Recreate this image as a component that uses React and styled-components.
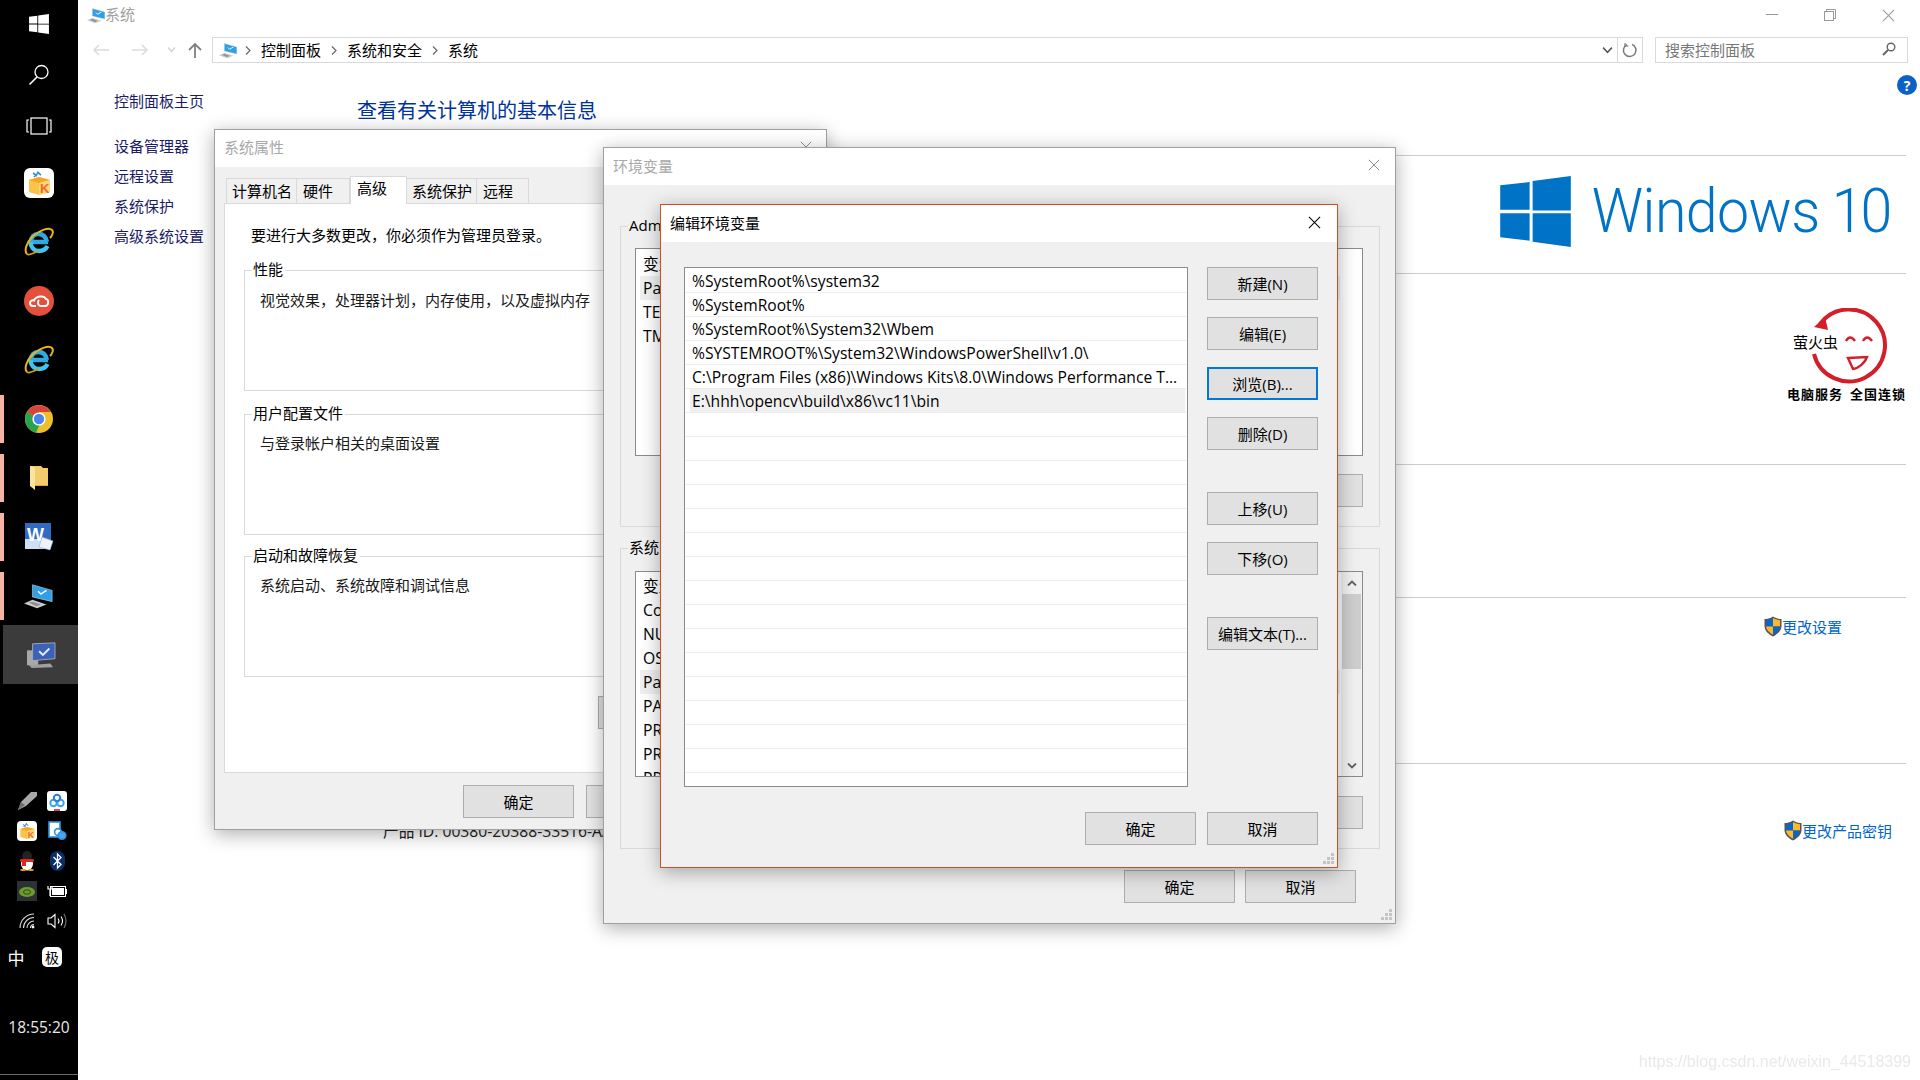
import React from 'react'
import styled, { createGlobalStyle } from 'styled-components'

const GlobalStyle = createGlobalStyle`
  html, body { margin: 0; padding: 0; background: #fff; }
  * { box-sizing: border-box; }
  body {
    font-family: "Open Sans", "Noto Sans CJK SC", sans-serif;
    font-size: 15px;
    color: #000;
  }
`

const Desktop = styled.div`
  position: relative;
  display: flex;
  width: 1920px;
  height: 1080px;
  overflow: hidden;
  background: #fff;
`

/* taskbar */
const Taskbar = styled.aside`
  display: flex;
  flex-direction: column;
  flex: none;
  width: 78px;
  height: 1080px;
  background: #000;
`
const SysButton = styled.div`
  display: flex;
  align-items: center;
  justify-content: center;
  height: ${p => p.$h}px;
`
const AppButton = styled.div`
  position: relative;
  display: flex;
  align-items: center;
  justify-content: center;
  height: 59px;
  background: ${p => (p.$active ? '#3b3b3b' : 'transparent')};
  margin-left: ${p => (p.$active ? 3 : 0)}px;
  ${p =>
    p.$open &&
    `&::before {
      content: '';
      position: absolute;
      left: 0;
      top: 6px;
      width: 4px;
      height: 48px;
      background: #f7b3a3;
    }`}
`
const AppGap = styled.div`
  height: 3px;
`
const Tray = styled.div`
  display: grid;
  grid-template-columns: 30px 30px;
  grid-auto-rows: 30px;
  margin-top: 102px;
  padding-left: 12px;
  > div {
    display: flex;
    align-items: center;
    justify-content: center;
  }
`
const LangRow = styled.div`
  display: flex;
  align-items: center;
  height: 30px;
  margin-top: 6px;
  padding-left: 6px;
  gap: 16px;
  color: #fff;
`
const LangGlyph = styled.span`
  width: 20px;
  text-align: center;
  font-size: 17px;
  font-weight: 400;
`
const ImeBadge = styled.span`
  display: flex;
  align-items: center;
  justify-content: center;
  width: 20px;
  height: 20px;
  border-radius: 5px;
  background: #fff;
  color: #000;
  font-size: 14px;
`
const Clock = styled.div`
  margin-top: 40px;
  height: 30px;
  line-height: 30px;
  text-align: center;
  color: #e8e8e8;
  font-size: 15.5px;
`
const TaskbarEnd = styled.div`
  margin-top: auto;
  height: 6px;
  border-top: 1px solid #6a6a6a;
`

/* explorer window behind the dialogs */
const Explorer = styled.main`
  display: flex;
  flex-direction: column;
  flex: 1;
  min-width: 0;
`
const TitleBar = styled.header`
  display: flex;
  align-items: center;
  height: 30px;
  padding: 0 3px 0 9px;
  color: #a0a0a0;
`
const TitleText = styled.span`
  margin: 0 0 3px -1px;
`
const Controls = styled.div`
  display: flex;
  margin-left: auto;
`
const Control = styled.div`
  display: flex;
  align-items: center;
  justify-content: center;
  width: 58px;
  height: 28px;
`
const NavBar = styled.nav`
  display: flex;
  align-items: flex-start;
  height: 38px;
  padding-top: 7px;
`
const NavButton = styled.div`
  display: flex;
  align-items: center;
  justify-content: center;
  flex: none;
  width: ${p => p.$w}px;
  height: 25px;
  margin-left: ${p => p.$ml || 0}px;
`
const AddressBox = styled.div`
  display: flex;
  align-items: center;
  flex: none;
  width: 1431px;
  height: 26px;
  padding-left: 6px;
  border: 1px solid #d9d9d9;
`
const AddressIcon = styled.span`
  display: flex;
  margin-right: 7px;
`
const Crumb = styled.span`
  margin: 0 10px 2px;
  white-space: nowrap;
`
const AddressEnd = styled.div`
  display: flex;
  align-items: center;
  margin-left: auto;
  height: 100%;
`
const RefreshCell = styled.div`
  display: flex;
  align-items: center;
  justify-content: center;
  width: 25px;
  height: 100%;
  margin-left: 4px;
  border-left: 1px solid #d9d9d9;
`
const SearchBox = styled.div`
  display: flex;
  align-items: center;
  justify-content: space-between;
  flex: none;
  width: 253px;
  height: 26px;
  margin-left: 12px;
  padding: 0 11px 2px 9px;
  border: 1px solid #d9d9d9;
  color: #777;
`
const Content = styled.div`
  position: relative;
  display: flex;
  flex: 1;
`
const SideNav = styled.div`
  flex: none;
  width: 279px;
  padding: 23px 0 0 36px;
`
const SideLink = styled.div`
  line-height: 20px;
  margin-top: ${p => p.$mt}px;
  color: #1b1b66;
`
const Body = styled.div`
  flex: 1;
  padding-right: 14px;
`
const Heading = styled.h1`
  margin: 0;
  height: 87px;
  padding-top: 28px;
  font-size: 20px;
  font-weight: 400;
  line-height: 30px;
  color: #003399;
`
const Section = styled.section`
  display: flex;
  height: ${p => p.$h}px;
  padding: ${p => p.$pt}px ${p => p.$pr}px 0 ${p => p.$pl || 0}px;
  border-top: 1px solid #cccccc;
  justify-content: ${p => p.$justify || 'flex-end'};
  align-items: flex-start;
`
const WindowsWord = styled.div`
  margin-left: -4px;
  font-family: Roboto, sans-serif;
  font-weight: 300;
  font-size: 62px;
  line-height: 70px;
  letter-spacing: -0.6px;
  color: #0173c7;
  white-space: nowrap;
  transform: scaleX(0.923);
  transform-origin: right center;
`
const TenSpace = styled.span`
  margin-left: 13px;
  letter-spacing: -3px;
`
const FireflyBlock = styled.div`
  display: flex;
  flex-direction: column;
  width: 119px;
`
const FireflyCaption = styled.div`
  display: flex;
  justify-content: space-between;
  line-height: 20px;
  font-size: 13px;
  font-weight: 700;
  letter-spacing: 1px;
  white-space: nowrap;
`
const ShieldLink = styled.a`
  display: flex;
  align-items: center;
  line-height: 20px;
  color: #0066cc;
`
const ProductId = styled.span`
  margin-top: 1px;
  line-height: 20px;
  font-size: 15.7px;
  white-space: nowrap;
  color: #222;
`
const HelpBadge = styled.div`
  position: absolute;
  top: 7px;
  right: 3px;
  display: flex;
  align-items: center;
  justify-content: center;
  width: 20px;
  height: 20px;
  border-radius: 50%;
  background: #0b62c4;
  color: #fff;
  font-weight: 700;
  font-size: 14px;
`

/* dialogs sit on the desktop */
const Dialog = styled.section`
  position: absolute;
  left: ${p => p.$left}px;
  top: ${p => p.$top}px;
  width: ${p => p.$w}px;
  height: ${p => p.$h}px;
  display: flex;
  flex-direction: column;
  background: #f0f0f0;
  border: 1px solid ${p => p.$border || '#a0a0a0'};
  box-shadow: 0 4px 18px rgba(0, 0, 0, 0.32);
`
const DialogTitle = styled.header`
  display: flex;
  align-items: center;
  justify-content: space-between;
  flex: none;
  height: ${p => p.$h}px;
  padding: 0 ${p => p.$pr}px ${p => p.$pb || 3}px 9px;
  background: #fff;
  color: ${p => p.$color};
`
const TabStrip = styled.div`
  display: flex;
  align-items: flex-end;
  height: 27px;
  margin: 10px 0 -1px 11px;
  position: relative;
  z-index: 1;
`
const Tab = styled.div`
  width: ${p => p.$w}px;
  height: ${p => (p.$active ? 28 : 26)}px;
  padding: ${p => (p.$active ? 1 : 2)}px 0 0 ${p => p.$pl}px;
  line-height: 20px;
  background: ${p => (p.$active ? '#fff' : '#f0f0f0')};
  border: 1px solid #d9d9d9;
  border-left-width: ${p => (p.$first || p.$active ? 1 : 0)}px;
  border-bottom: ${p => (p.$active ? '0' : '1px solid #d9d9d9')};
`
const TabPanel = styled.div`
  height: 570px;
  margin: 0 10px 0 9px;
  padding: 21px 0 0 19px;
  background: #fff;
  border: 1px solid #d9d9d9;
`
const PanelNote = styled.p`
  margin: 0 0 25px 7px;
  line-height: 20px;
  white-space: nowrap;
`
const Group = styled.div`
  position: relative;
  height: ${p => p.$h}px;
  width: ${p => p.$w}px;
  margin: ${p => p.$mt || 0}px 0 0 ${p => p.$ml || 0}px;
  border: 1px solid #d9d9d9;
  padding: ${p => p.$pt || 18}px 0 0 ${p => p.$pl || 15}px;
`
const GroupLegend = styled.span`
  position: absolute;
  top: -12px;
  left: 7px;
  padding: 0 2px 0 1px;
  line-height: 20px;
  background: ${p => p.$bg};
  white-space: nowrap;
`
const GroupText = styled.div`
  line-height: 20px;
  white-space: nowrap;
  color: #1a1a1a;
`
const Button = styled.button`
  flex: none;
  display: block;
  width: 111px;
  height: 33px;
  margin: ${p => p.$mt || 0}px 0 0 ${p => p.$ml || 0}px;
  padding: 0;
  background: #e1e1e1;
  border: ${p => (p.$focus ? '2px solid #0078d7' : '1px solid #adadad')};
  font: inherit;
  color: #000;
`
const DialogFoot = styled.div`
  display: flex;
  justify-content: flex-end;
  gap: ${p => p.$gap}px;
  margin-top: ${p => p.$mt}px;
  padding-right: ${p => p.$pr}px;
`
const Grip = styled.svg`
  position: absolute;
  right: 3px;
  bottom: 3px;
`
const VarList = styled.div`
  position: relative;
  width: 728px;
  height: ${p => p.$h}px;
  padding: ${p => p.$pt}px 0 0 4px;
  background: #fff;
  border: 1px solid #8a8a96;
  overflow: hidden;
`
const VarRow = styled.div`
  width: 700px;
  height: 24px;
  line-height: 24px;
  padding-left: 3px;
  font-size: 15.7px;
  white-space: nowrap;
  background: ${p => (p.$selected ? '#f0f0f0' : 'transparent')};
`
const ScrollTrack = styled.div`
  position: absolute;
  top: 0;
  right: 0;
  bottom: 0;
  width: 21px;
  background: #f0f0f0;
  display: flex;
  flex-direction: column;
  align-items: center;
`
const ScrollThumb = styled.div`
  width: 19px;
  height: 75px;
  margin-top: 1px;
  background: #cdcdcd;
`
const ScrollArrow = styled.div`
  display: flex;
  align-items: center;
  justify-content: center;
  height: 21px;
  margin-top: ${p => (p.$bottom ? 'auto' : 0)};
`
const EditBody = styled.div`
  display: flex;
  gap: 19px;
  padding: 25px 0 0 23px;
`
const PathList = styled.div`
  flex: none;
  width: 504px;
  height: 520px;
  padding-top: 1px;
  background: #fff;
  border: 1px solid #8a8a96;
  overflow: hidden;
`
const PathRow = styled.div`
  height: 24px;
  margin: 0 1px;
  padding-left: 4px;
  border-bottom: 1px solid #ececec;
`
const PathText = styled.div`
  height: 23px;
  margin-right: 1px;
  padding-left: 2px;
  font-size: 15.65px;
  line-height: 25px;
  white-space: nowrap;
  background: ${p => (p.$selected ? '#f0f0f0' : 'transparent')};
`
const ButtonColumn = styled.div`
  display: flex;
  flex-direction: column;
`
const Watermark = styled.div`
  position: absolute;
  right: 9px;
  bottom: 9px;
  font-family: "Liberation Sans", sans-serif;
  font-size: 16px;
  color: #e9e9e9;
  filter: blur(0.4px);
`

/* drawings */
const WinLogo = ({ size, color }) => (
  <svg width={size} height={size} viewBox="0 0 70.3 70.7" fill={color}>
    <polygon points="0,9.3 29.3,6 29.3,33.7 0,33.7" />
    <polygon points="32.3,5 70.3,0 70.3,34.3 32.3,34.3" />
    <polygon points="0,37 29.3,37 29.3,64.5 0,61" />
    <polygon points="32.3,37 70.3,37 70.3,70.7 32.3,65.5" />
  </svg>
)
const SearchGlyph = () => (
  <svg width="22" height="22" viewBox="0 0 22 22" fill="none" stroke="#fff" strokeWidth="1.3">
    <circle cx="13.5" cy="8" r="6.5" />
    <path d="M9 13 L1.5 20.5" strokeWidth="1.6" />
  </svg>
)
const TaskViewGlyph = () => (
  <svg width="26" height="18" viewBox="0 0 26 18" fill="none" stroke="#fff" strokeWidth="1.2">
    <rect x="5" y="1" width="16" height="16" />
    <path d="M3 3H1V15H3M23 3H25V15H23" />
  </svg>
)
const KuaiBox = ({ size }) => (
  <svg width={size} height={size} viewBox="0 0 30 30">
    <rect width="30" height="30" rx="6" fill="#fff" />
    <path d="M5 12L15 9L26 12V24L15 27L5 24Z" fill="#fbc34a" />
    <path d="M5 12L15 15L26 12L15 9Z" fill="#f7a623" />
    <path d="M15 15V27L26 24V12Z" fill="#fdd77c" />
    <text x="16" y="25" fontSize="13" fontWeight="700" fontFamily="Liberation Sans" fill="#ef6a2a">K</text>
    <path d="M9 5L13 8M13 4L17 7M10 9L15 4" stroke="#3a8fd8" strokeWidth="1.6" fill="none" />
  </svg>
)
const IeGlyph = () => (
  <svg width="32" height="30" viewBox="0 0 32 30" fill="none">
    <path d="M25 15H8C8 10 11 7 15.5 7S23 10 24 15" stroke="#2fa9e0" strokeWidth="4.4" />
    <path d="M7.5 15C7.5 20 11 24 16 24C20 24 23 22 24.5 19" stroke="#43c4ef" strokeWidth="4.4" />
    <path d="M4 27C1 24 3 16 10 9C17 3 26 0 29 3C31 5 29 9 27 11" stroke="#eeb21d" strokeWidth="2" />
    <path d="M4 27C6 29 11 26 15 24" stroke="#d79a12" strokeWidth="1.8" />
  </svg>
)
const CloudBadge = () => (
  <svg width="30" height="30" viewBox="0 0 30 30" fill="none">
    <circle cx="15" cy="15" r="15" fill="#e4503c" />
    <path d="M12 20H9C6.5 20 6 18 6 17C6 15 8 14 10 14.5C12 10 20 9 22 13C25 13 25 20 21 20H17C14 20 13 16 15 14" stroke="#fff" strokeWidth="2" />
  </svg>
)
const ChromeGlyph = () => (
  <svg width="28" height="28" viewBox="0 0 28 28">
    <circle cx="14" cy="14" r="14" fill="#ecc02b" />
    <path d="M14 14L2 7A14 14 0 0 1 26 7H14Z" fill="#d9443a" />
    <path d="M14 14L2 7A14 14 0 0 0 11 27.7L17 14Z" fill="#2ba24f" />
    <circle cx="14" cy="14" r="6.6" fill="#fff" />
    <circle cx="14" cy="14" r="5.2" fill="#4a86e8" />
  </svg>
)
const FolderGlyph = () => (
  <svg width="20" height="26" viewBox="0 0 20 26">
    <path d="M1 1H12L14 3H19V20H1Z" fill="#f3cc6c" />
    <path d="M1 1L6 3V25L1 21Z" fill="#fbe3a0" />
    <path d="M6 20H19V21H6Z" fill="#d9a93e" />
  </svg>
)
const WordGlyph = () => (
  <svg width="30" height="30" viewBox="0 0 30 30">
    <rect x="1" y="1" width="26" height="26" fill="#2e6cc4" />
    <rect x="1" y="17" width="22" height="10" fill="#cfe0f5" />
    <text x="3" y="19" fontSize="18" fontWeight="700" fontFamily="Liberation Sans" fill="#fff">W</text>
    <path d="M18 15L29 19L26 28L15 25Z" fill="#eef3fa" stroke="#8ba9d4" strokeWidth="0.6" />
  </svg>
)
const PcGlyph = ({ size }) => (
  <svg width={size} height={size} viewBox="0 0 32 28">
    <polygon points="9,2 30,8 30,20 9,15" fill="#2f9fe6" stroke="#d8d8d8" strokeWidth="0.6" />
    <path d="M15 9L18 12L24 8" stroke="#fff" strokeWidth="1.6" fill="none" />
    <polygon points="0,22 9,18 24,23 14,27" fill="#c9c9c9" />
    <polygon points="5,21 9,20 18,23 13,25" fill="#8f8f8f" />
  </svg>
)
const SystemGlyph = () => (
  <svg width="30" height="28" viewBox="0 0 32 30">
    <rect x="1" y="10" width="12" height="16" fill="#a8a8a8" />
    <polygon points="7,3 31,2 31,19 7,21" fill="#3a62b8" stroke="#a9a9a9" />
    <path d="M14 11L18 15L25 8" stroke="#e8eefc" strokeWidth="2" fill="none" />
    <polygon points="3,26 26,24 29,28 6,29" fill="#9f9f9f" />
  </svg>
)
const TinyArrow = ({ dir, color }) => (
  <svg width="18" height="14" viewBox="0 0 18 14" fill="none" stroke={color} strokeWidth="1.6">
    {dir === 'left' && <path d="M17 7H2M7 2L2 7L7 12" />}
    {dir === 'right' && <path d="M1 7H16M11 2L16 7L11 12" />}
  </svg>
)
const UpArrow = () => (
  <svg width="14" height="16" viewBox="0 0 14 16" fill="none" stroke="#808080" strokeWidth="1.8">
    <path d="M7 16V2M1 8L7 2L13 8" />
  </svg>
)
const Chevron = ({ color, w = 9, h = 6, up, sw = 1.4 }) => (
  <svg width={w} height={h} viewBox="0 0 10 6" fill="none" stroke={color} strokeWidth={sw} preserveAspectRatio="none">
    <path d={up ? 'M1 5.5L5 1.5L9 5.5' : 'M1 .5L5 4.5L9 .5'} />
  </svg>
)
const CrumbArrow = () => (
  <svg width="6" height="9" viewBox="0 0 6 9" fill="none" stroke="#666" strokeWidth="1.2">
    <path d="M1 .5L5 4.5L1 8.5" />
  </svg>
)
const RefreshGlyph = () => (
  <svg width="16" height="16" viewBox="0 0 16 16" fill="none" stroke="#777" strokeWidth="1.5">
    <path d="M5 2.6A6.3 6.3 0 1 0 10 2.4" />
    <path d="M3 1V4H6.5" strokeWidth="1.2" />
  </svg>
)
const LensGlyph = () => (
  <svg width="14" height="14" viewBox="0 0 14 14" fill="none" stroke="#666" strokeWidth="1.4">
    <circle cx="9" cy="5" r="3.8" />
    <path d="M6 8L1 13" strokeWidth="1.9" />
  </svg>
)
const CloseGlyph = ({ size, color }) => (
  <svg width={size} height={size} viewBox="0 0 14 14" fill="none" stroke={color} strokeWidth="1.1">
    <path d="M1 1L13 13M13 1L1 13" />
  </svg>
)
const MinGlyph = () => (
  <svg width="12" height="2" viewBox="0 0 12 2">
    <rect width="12" height="1" fill="#999" />
  </svg>
)
const RestoreGlyph = () => (
  <svg width="12" height="12" viewBox="0 0 12 12" fill="none" stroke="#999">
    <rect x=".5" y="2.5" width="9" height="9" />
    <path d="M2.5 2.5V.5H11.5V9.5H9.5" />
  </svg>
)
const Shield = () => (
  <svg width="18" height="21" viewBox="0 0 18 21">
    <path d="M9 .5C12 2.5 15 3 17.5 3V10C17.5 15 13 18.5 9 20.5C5 18.5 .5 15 .5 10V3C3 3 6 2.5 9 .5Z" fill="#555" />
    <path d="M9 2C6.5 3.4 4 4 2 4.2V10.5H9Z" fill="#0a66c8" />
    <path d="M9 2C11.5 3.4 14 4 16 4.2V10.5H9Z" fill="#fdb92c" />
    <path d="M2 10.5C2.3 14 6 17 9 18.8V10.5Z" fill="#fdb92c" />
    <path d="M16 10.5C15.7 14 12 17 9 18.8V10.5Z" fill="#0a66c8" />
  </svg>
)
const Firefly = () => (
  <svg width="119" height="76" viewBox="0 0 119 76">
    <path d="M33 16A36 36 0 1 1 27 46" fill="none" stroke="#d2202a" strokeWidth="4" />
    <polygon points="27,19 38,9 41,22" fill="#d2202a" />
    <path d="M59 33Q63 26 68 33M76 33Q80 26 85 33" fill="none" stroke="#d2202a" strokeWidth="2.4" />
    <path d="M61 50L80 49C78 55 72 60 66 61Z" fill="none" stroke="#d2202a" strokeWidth="2.4" />
    <text x="6" y="40" fontSize="15" fontFamily="Noto Sans CJK SC">萤火虫</text>
  </svg>
)
const GripDots = () => (
  <Grip width="11" height="11" viewBox="0 0 11 11" fill="#c4c4c4">
    <rect x="8" y="0" width="3" height="3" />
    <rect x="4" y="4" width="3" height="3" />
    <rect x="8" y="4" width="3" height="3" />
    <rect x="0" y="8" width="3" height="3" />
    <rect x="4" y="8" width="3" height="3" />
    <rect x="8" y="8" width="3" height="3" />
  </Grip>
)
const PenTray = () => (
  <svg width="20" height="20" viewBox="0 0 20 20">
    <polygon points="1,19 4,11 14,1 20,1 20,5 9,15" fill="#a8a8a8" />
    <polygon points="1,19 4,11 8,14" fill="#6c6c6c" />
  </svg>
)
const CloudTray = () => (
  <svg width="20" height="20" viewBox="0 0 20 20" fill="none">
    <rect width="20" height="20" rx="3" fill="#fff" />
    <circle cx="6.5" cy="12" r="3.2" stroke="#38a3ee" strokeWidth="2" />
    <circle cx="13.5" cy="12" r="3.2" stroke="#38a3ee" strokeWidth="2" />
    <circle cx="10" cy="7" r="3.2" stroke="#2b7fe0" strokeWidth="2" />
    <rect x="7" y="18" width="6" height="2" fill="#e0465a" />
  </svg>
)
const PhoneTray = () => (
  <svg width="20" height="20" viewBox="0 0 20 20" fill="none" stroke="#2f93de" strokeWidth="1.6">
    <rect x="2" y="1" width="11" height="15" fill="#fff" />
    <circle cx="11" cy="11" r="3.4" fill="#fff" />
    <circle cx="15" cy="14.5" r="3.8" fill="#4aa6e8" />
  </svg>
)
const QqTray = () => (
  <svg width="18" height="20" viewBox="0 0 18 20">
    <ellipse cx="9" cy="13" rx="6" ry="6.5" fill="#fff" />
    <ellipse cx="9" cy="5" rx="5" ry="5" fill="#222" />
    <rect x="2" y="8" width="14" height="3" rx="1.4" fill="#e02a20" />
    <rect x="4" y="10" width="4" height="5" fill="#e02a20" />
    <ellipse cx="5" cy="19" rx="3" ry="1" fill="#f5a623" />
    <ellipse cx="13" cy="19" rx="3" ry="1" fill="#f5a623" />
  </svg>
)
const BtTray = () => (
  <svg width="15" height="20" viewBox="0 0 15 20" fill="none">
    <rect width="15" height="20" rx="7.5" fill="#0a2f66" />
    <path d="M3.5 6L11 13.5L7.5 17V3L11 6.5L3.5 14" stroke="#fff" strokeWidth="1.3" />
  </svg>
)
const NvidiaTray = () => (
  <svg width="20" height="20" viewBox="0 0 20 20" fill="none">
    <rect width="20" height="20" fill="#2a3236" />
    <ellipse cx="10" cy="11" rx="8" ry="5" fill="#6d9c2c" />
    <ellipse cx="10" cy="11" rx="3.5" ry="2.2" stroke="#2f4a18" />
  </svg>
)
const BatteryTray = () => (
  <svg width="20" height="14" viewBox="0 0 20 14" fill="none" stroke="#fff">
    <rect x="3.5" y="2.5" width="15" height="10" />
    <rect x="5" y="4" width="12" height="7" fill="#fff" stroke="none" />
    <rect x="18.5" y="5" width="1.5" height="5" fill="#fff" stroke="none" />
    <path d="M1 2V5H5V2M3 5V12" strokeWidth="1.2" />
  </svg>
)
const WifiTray = () => (
  <svg width="16" height="16" viewBox="0 0 16 16" fill="none" stroke="#ddd" strokeWidth="1.1">
    <path d="M1 15A14 14 0 0 1 15 1M4.5 15A10.5 10.5 0 0 1 15 4.5M8 15A7 7 0 0 1 15 8M11.5 15A3.5 3.5 0 0 1 15 11.5" />
    <circle cx="14" cy="14" r="1.4" fill="#fff" stroke="none" />
  </svg>
)
const SpeakerTray = () => (
  <svg width="20" height="16" viewBox="0 0 20 16" fill="none" stroke="#fff" strokeWidth="1.1">
    <path d="M1 5H4L8 1.5V14.5L4 11H1Z" />
    <path d="M11 5.5Q13 8 11 10.5" />
    <path d="M14 3.5Q17 8 14 12.5" />
    <path d="M17 1Q21 8 17 15" stroke="#777" />
  </svg>
)

const apps = [
  { id: 'kuai', icon: <KuaiBox size={30} /> },
  { id: 'ie1', icon: <IeGlyph /> },
  { id: 'cloud', icon: <CloudBadge /> },
  { id: 'ie2', icon: <IeGlyph /> },
  { id: 'chrome', icon: <ChromeGlyph />, open: true },
  { id: 'folder', icon: <FolderGlyph />, open: true },
  { id: 'word', icon: <WordGlyph />, open: true },
  { id: 'pc', icon: <PcGlyph size={30} />, open: true },
  { id: 'sys', icon: <SystemGlyph />, active: true },
]
const paths = [
  '%SystemRoot%\\system32',
  '%SystemRoot%',
  '%SystemRoot%\\System32\\Wbem',
  '%SYSTEMROOT%\\System32\\WindowsPowerShell\\v1.0\\',
  'C:\\Program Files (x86)\\Windows Kits\\8.0\\Windows Performance T...',
  'E:\\hhh\\opencv\\build\\x86\\vc11\\bin',
]
const userVars = ['变量', 'Path', 'TEMP', 'TMP']
const systemVars = ['变量', 'ComSpec', 'NUMBER_OF_PROCESSORS', 'OS', 'Path', 'PATHEXT', 'PROCESSOR_ARCHITECTURE', 'PROCESSOR_IDENTIFIER', 'PROCESSOR_LEVEL']

const App = () => {
  return (
    <Desktop>
      <GlobalStyle />
      <Taskbar>
        <SysButton $h={48}><WinLogo size={20} color="#fff" /></SysButton>
        <SysButton $h={53}><SearchGlyph /></SysButton>
        <SysButton $h={49}><TaskViewGlyph /></SysButton>
        <AppGap />
        {apps.map(a => (
          <AppButton key={a.id} $open={a.open} $active={a.active}>{a.icon}</AppButton>
        ))}
        <Tray>
          <div><PenTray /></div>
          <div><CloudTray /></div>
          <div><KuaiBox size={20} /></div>
          <div><PhoneTray /></div>
          <div><QqTray /></div>
          <div><BtTray /></div>
          <div><NvidiaTray /></div>
          <div><BatteryTray /></div>
          <div><WifiTray /></div>
          <div><SpeakerTray /></div>
        </Tray>
        <LangRow>
          <LangGlyph>中</LangGlyph>
          <ImeBadge>极</ImeBadge>
        </LangRow>
        <Clock>18:55:20</Clock>
        <TaskbarEnd />
      </Taskbar>

      <Explorer>
        <TitleBar>
          <PcGlyph size={19} />
          <TitleText>系统</TitleText>
          <Controls>
            <Control><MinGlyph /></Control>
            <Control><RestoreGlyph /></Control>
            <Control><CloseGlyph size={13} color="#999" /></Control>
          </Controls>
        </TitleBar>
        <NavBar>
          <NavButton $w={30} $ml={8}><TinyArrow dir="left" color="#dcdcdc" /></NavButton>
          <NavButton $w={48}><TinyArrow dir="right" color="#dcdcdc" /></NavButton>
          <NavButton $w={14}><Chevron color="#d0d0d0" /></NavButton>
          <NavButton $w={34}><UpArrow /></NavButton>
          <AddressBox>
            <AddressIcon><PcGlyph size={19} /></AddressIcon>
            <CrumbArrow />
            <Crumb>控制面板</Crumb>
            <CrumbArrow />
            <Crumb>系统和安全</Crumb>
            <CrumbArrow />
            <Crumb>系统</Crumb>
            <AddressEnd>
              <Chevron color="#555" w={11} h={7} />
              <RefreshCell><RefreshGlyph /></RefreshCell>
            </AddressEnd>
          </AddressBox>
          <SearchBox>
            <span>搜索控制面板</span>
            <LensGlyph />
          </SearchBox>
        </NavBar>
        <Content>
          <SideNav>
            <SideLink $mt={0}>控制面板主页</SideLink>
            <SideLink $mt={25}>设备管理器</SideLink>
            <SideLink $mt={10}>远程设置</SideLink>
            <SideLink $mt={10}>系统保护</SideLink>
            <SideLink $mt={10}>高级系统设置</SideLink>
          </SideNav>
          <Body>
            <Heading>查看有关计算机的基本信息</Heading>
            <Section $h={118} $pt={20} $pr={16}>
              <WinLogo size={71} color="#0173c7" />
              <WindowsWord>Windows<TenSpace>10</TenSpace></WindowsWord>
            </Section>
            <Section $h={191} $pt={34} $pr={0}>
              <FireflyBlock>
                <Firefly />
                <FireflyCaption><span>电脑服务</span><span>全国连锁</span></FireflyCaption>
              </FireflyBlock>
            </Section>
            <Section $h={133} $pt={0} $pr={0} />
            <Section $h={166} $pt={18} $pr={64}>
              <ShieldLink><Shield />更改设置</ShieldLink>
            </Section>
            <Section $h={120} $pt={56} $pr={14} $pl={26} $justify="space-between">
              <ProductId>产品 ID: 00380-20388-33516-AAOEM</ProductId>
              <ShieldLink><Shield />更改产品密钥</ShieldLink>
            </Section>
          </Body>
          <HelpBadge>?</HelpBadge>
        </Content>
      </Explorer>

      <Dialog $left={214} $top={129} $w={613} $h={701}>
        <DialogTitle $h={37} $pr={14} $pb={4} $color="#a8a8a8">
          系统属性
          <CloseGlyph size={12} color="#888" />
        </DialogTitle>
        <TabStrip>
          <Tab $w={71} $pl={5} $first>计算机名</Tab>
          <Tab $w={53} $pl={6}>硬件</Tab>
          <Tab $w={57} $pl={6} $active>高级</Tab>
          <Tab $w={70} $pl={5}>系统保护</Tab>
          <Tab $w={52} $pl={6}>远程</Tab>
        </TabStrip>
        <TabPanel>
          <PanelNote>要进行大多数更改，你必须作为管理员登录。</PanelNote>
          <Group $h={121} $w={560} $pt={19}>
            <GroupLegend $bg="#fff">性能</GroupLegend>
            <GroupText>视觉效果，处理器计划，内存使用，以及虚拟内存</GroupText>
          </Group>
          <Group $h={121} $w={560} $mt={23}>
            <GroupLegend $bg="#fff">用户配置文件</GroupLegend>
            <GroupText>与登录帐户相关的桌面设置</GroupText>
          </Group>
          <Group $h={121} $w={560} $mt={21}>
            <GroupLegend $bg="#fff">启动和故障恢复</GroupLegend>
            <GroupText>系统启动、系统故障和调试信息</GroupText>
          </Group>
          <Button $mt={19} $ml={354}>环境变量(N)...</Button>
        </TabPanel>
        <DialogFoot $mt={12} $gap={12} $pr={6}>
          <Button>确定</Button>
          <Button>取消</Button>
          <Button>应用(A)</Button>
        </DialogFoot>
      </Dialog>

      <Dialog $left={603} $top={147} $w={793} $h={777}>
        <DialogTitle $h={37} $pr={15} $color="#a8a8a8">
          环境变量
          <CloseGlyph size={12} color="#888" />
        </DialogTitle>
        <Group $h={301} $w={760} $mt={41} $ml={16} $pt={21} $pl={14}>
          <GroupLegend $bg="#f0f0f0">Administrator 的用户变量(U)</GroupLegend>
          <VarList $h={208} $pt={3}>
            {userVars.map((v, i) => (
              <VarRow key={v} $selected={i === 1}>{v}</VarRow>
            ))}
          </VarList>
          <Button $mt={18} $ml={617}>删除(D)</Button>
        </Group>
        <Group $h={301} $w={760} $mt={21} $ml={16} $pt={22} $pl={14}>
          <GroupLegend $bg="#f0f0f0">系统变量(S)</GroupLegend>
          <VarList $h={206} $pt={2}>
            {systemVars.map((v, i) => (
              <VarRow key={v + i} $selected={i === 4}>{v}</VarRow>
            ))}
            <ScrollTrack>
              <ScrollArrow><Chevron color="#606060" w={10} h={6} up sw={1.8} /></ScrollArrow>
              <ScrollThumb />
              <ScrollArrow $bottom><Chevron color="#606060" w={10} h={6} sw={1.8} /></ScrollArrow>
            </ScrollTrack>
          </VarList>
          <Button $mt={19} $ml={617}>删除(L)</Button>
        </Group>
        <DialogFoot $mt={21} $gap={10} $pr={39}>
          <Button>确定</Button>
          <Button>取消</Button>
        </DialogFoot>
        <GripDots />
      </Dialog>

      <Dialog $left={660} $top={204} $w={678} $h={664} $border="#cf4f24">
        <DialogTitle $h={37} $pr={16} $color="#000">
          编辑环境变量
          <CloseGlyph size={13} color="#000" />
        </DialogTitle>
        <EditBody>
          <PathList>
            {Array.from({ length: 22 }, (_, i) => (
              <PathRow key={i}>
                <PathText $selected={i === 5}>{paths[i]}</PathText>
              </PathRow>
            ))}
          </PathList>
          <ButtonColumn>
            <Button>新建(N)</Button>
            <Button $mt={17}>编辑(E)</Button>
            <Button $mt={17} $focus>浏览(B)...</Button>
            <Button $mt={17}>删除(D)</Button>
            <Button $mt={42}>上移(U)</Button>
            <Button $mt={17}>下移(O)</Button>
            <Button $mt={42}>编辑文本(T)...</Button>
          </ButtonColumn>
        </EditBody>
        <DialogFoot $mt={25} $gap={11} $pr={19}>
          <Button>确定</Button>
          <Button>取消</Button>
        </DialogFoot>
        <GripDots />
      </Dialog>

      <Watermark>https://blog.csdn.net/weixin_44518399</Watermark>
    </Desktop>
  )
}

export default App
